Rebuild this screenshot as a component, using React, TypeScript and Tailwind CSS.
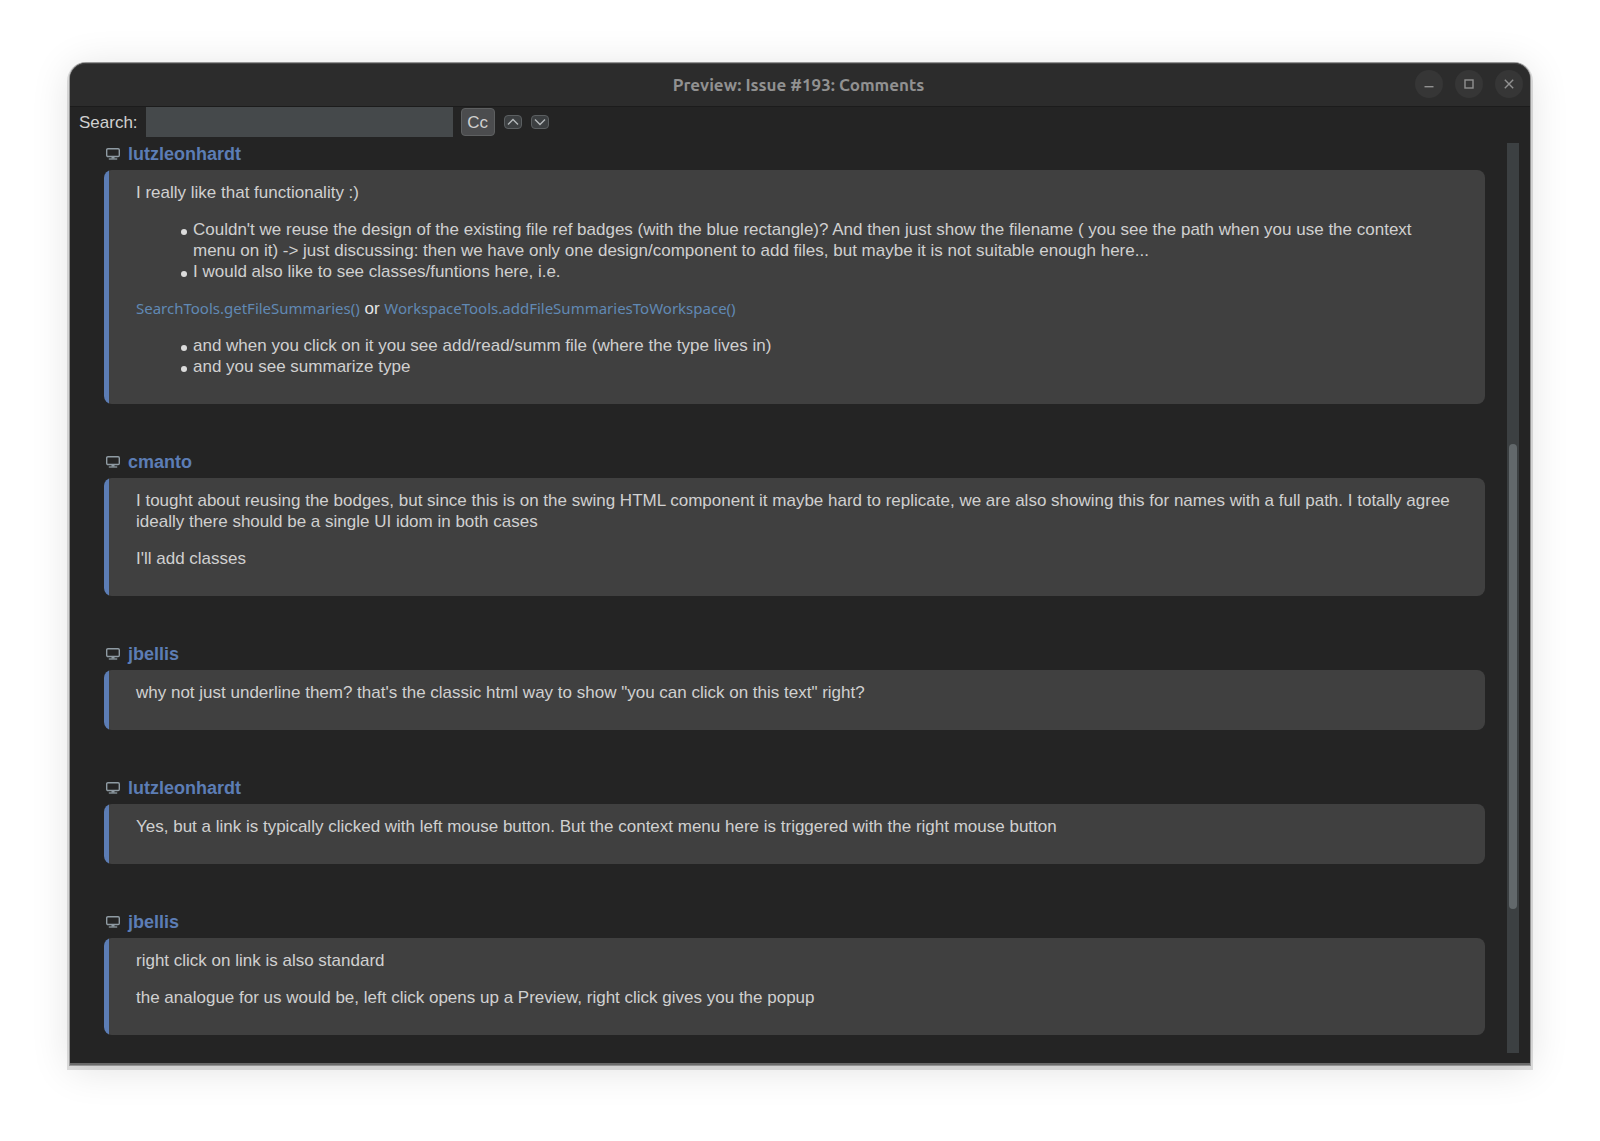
import type { ReactNode } from 'react';

type Comment = {
  author: string;
  body: ReactNode;
};

const comments: Comment[] = [
  {
    author: 'lutzleonhardt',
    body: (
      <>
        <p>I really like that functionality :)</p>
        <BulletList
          items={[
            "Couldn't we reuse the design of the existing file ref badges (with the blue rectangle)? And then just show the filename ( you see the path when you use the context menu on it) -> just discussing: then we have only one design/component to add files, but maybe it is not suitable enough here...",
            'I would also like to see classes/funtions here, i.e.',
          ]}
        />
        <p className="text-[#e6e6e6]">
          <CodeLink>SearchTools.getFileSummaries()</CodeLink> or{' '}
          <CodeLink>WorkspaceTools.addFileSummariesToWorkspace()</CodeLink>
        </p>
        <BulletList
          items={[
            'and when you click on it you see add/read/summ file (where the type lives in)',
            'and you see summarize type',
          ]}
        />
      </>
    ),
  },
  {
    author: 'cmanto',
    body: (
      <>
        <p>
          I tought about reusing the bodges, but since this is on the swing HTML component it maybe hard to
          replicate, we are also showing this for names with a full path. I totally agree ideally there should be
          a single UI idom in both cases
        </p>
        <p>I'll add classes</p>
      </>
    ),
  },
  {
    author: 'jbellis',
    body: <p>why not just underline them? that's the classic html way to show "you can click on this text" right?</p>,
  },
  {
    author: 'lutzleonhardt',
    body: (
      <p>
        Yes, but a link is typically clicked with left mouse button. But the context menu here is triggered with the
        right mouse button
      </p>
    ),
  },
  {
    author: 'jbellis',
    body: (
      <>
        <p>right click on link is also standard</p>
        <p>the analogue for us would be, left click opens up a Preview, right click gives you the popup</p>
      </>
    ),
  },
];

function BulletList({ items }: { items: string[] }) {
  return (
    <ul className="pl-[45px]">
      {items.map((item) => (
        <li
          key={item}
          className="flex gap-1.5 before:mt-2.5 before:size-1.5 before:shrink-0 before:rounded-full before:bg-[#dcdcdc] before:content-['']"
        >
          <span>{item}</span>
        </li>
      ))}
    </ul>
  );
}

function CodeLink({ children }: { children: ReactNode }) {
  return (
    <a href="#" className="font-['Noto_Sans',sans-serif] text-[15px] leading-none text-[#6189b4]">
      {children}
    </a>
  );
}

function MonitorIcon() {
  return (
    <svg width="14" height="12" viewBox="0 0 14 12" fill="none" stroke="#8f9ba3" aria-hidden="true">
      <rect x="0.7" y="0.7" width="12.6" height="7.8" rx="1.2" strokeWidth="1.4" />
      <path d="M7 8.6v2" strokeWidth="3" />
      <path d="M2.8 11h8.4" strokeWidth="1.3" />
    </svg>
  );
}

function WindowButton({ label, children }: { label: string; children: ReactNode }) {
  return (
    <button type="button" aria-label={label} className="flex size-7 items-center justify-center rounded-full bg-[#363636]">
      <svg width="12" height="12" viewBox="0 0 12 12" fill="none" stroke="#919191" aria-hidden="true">
        {children}
      </svg>
    </button>
  );
}

function ArrowButton({ label, d }: { label: string; d: string }) {
  return (
    <button
      type="button"
      aria-label={label}
      className="flex h-[14px] w-[18px] items-center justify-center rounded-sm border border-[#5b5f61] bg-[#3c3f41]"
    >
      <svg width="12" height="8" viewBox="0 0 12 8" className="shrink-0" fill="none" stroke="#b4b8ba" strokeWidth="1.4" aria-hidden="true">
        <path d={d} />
      </svg>
    </button>
  );
}

export default function App() {
  return (
    <div className="flex min-h-screen flex-col bg-white px-[70px] pt-[63px] pb-[76px] font-['Liberation_Sans',Arial,sans-serif] text-[17px] leading-[21px] text-[#d0d0d0]">
      <div className="flex grow flex-col rounded-t-2xl border-b-2 border-[#6a6a6a] bg-[#242424] shadow-[0_0_0_1px_rgba(0,0,0,0.3),0_2px_0_3px_rgba(0,0,0,0.12),0_4px_40px_rgba(0,0,0,0.12)]">
        <header className="grid h-11 grid-cols-[1fr_auto_1fr] items-center rounded-t-2xl border-t border-b border-t-[#454545] border-b-[#1c1c1c] bg-[#2c2c2c] pr-[7px] pb-0.5 pl-1">
          <h1 className="col-start-2 font-['Ubuntu','Noto_Sans',sans-serif] text-[17px] font-semibold text-[#919191]">
            Preview: Issue #193: Comments
          </h1>
          <div className="flex justify-end gap-3">
            <WindowButton label="Minimize">
              <path d="M1.5 8.7h9" strokeWidth="1.4" />
            </WindowButton>
            <WindowButton label="Maximize">
              <rect x="2" y="2" width="8" height="8" strokeWidth="1.4" />
            </WindowButton>
            <WindowButton label="Close">
              <path d="M1.8 1.8l8.4 8.4M10.2 1.8l-8.4 8.4" strokeWidth="1.4" />
            </WindowButton>
          </div>
        </header>

        <div className="flex items-center pl-[9px]">
          <label htmlFor="search">Search:</label>
          <input id="search" type="text" className="ml-2 h-[30px] w-[307px] bg-[#45494b] px-2 outline-none" />
          <button
            type="button"
            aria-label="Match case"
            className="ml-2 h-7 w-[34px] rounded-sm border border-[#5e6061] bg-[#4b4c4e]"
          >
            Cc
          </button>
          <div className="ml-[9px] flex gap-[9px]">
            <ArrowButton label="Previous match" d="M1 6.5l5-5 5 5" />
            <ArrowButton label="Next match" d="M1 1.5l5 5 5-5" />
          </div>
        </div>

        <div className="mt-1.5 mb-2.5 flex grow pr-[11px]">
          <main className="flex min-w-0 flex-1 flex-col gap-[47px] pr-[22px] pl-[34px]">
            {comments.map(({ author, body }, i) => (
              <article key={i}>
                <h2 className="mb-[5px] flex h-[22px] items-center gap-2 pl-[2px] text-lg font-bold text-[#5c7db5]">
                  <MonitorIcon />
                  {author}
                </h2>
                <div className="flex flex-col gap-4 rounded-lg bg-[linear-gradient(to_right,#5c7db5_5px,#404040_5px)] pt-3 pr-8 pb-[27px] pl-8">
                  {body}
                </div>
              </article>
            ))}
          </main>
          <div className="flex w-3 shrink-0 flex-col items-center bg-[#3c4042]">
            <div className="h-[301px] shrink-0" />
            <div className="h-[465px] w-2 rounded-full bg-[#62686b]" />
          </div>
        </div>
      </div>
    </div>
  );
}
